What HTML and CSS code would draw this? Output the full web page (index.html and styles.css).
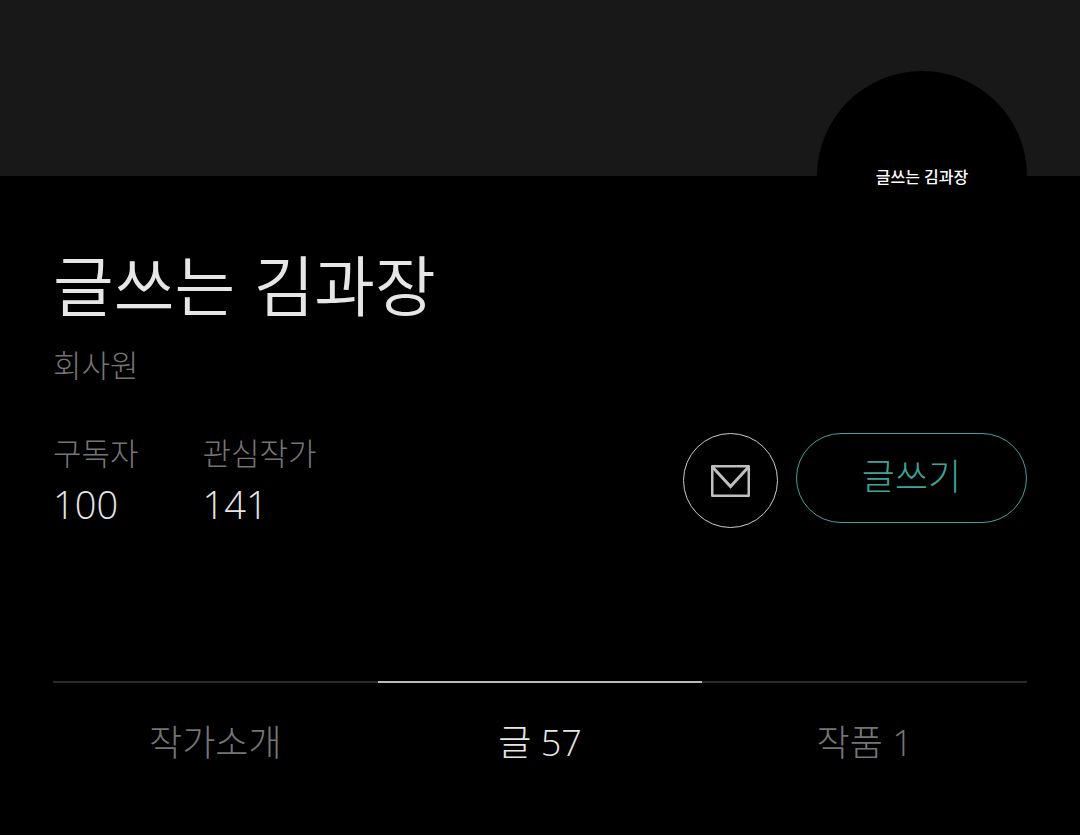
FILE: index.html
```html
<!DOCTYPE html>
<html lang="ko">
<head>
  <meta charset="UTF-8">
  <meta name="viewport" content="width=device-width, initial-scale=1.0">
  <title>글쓰는 김과장</title>
  <link rel="stylesheet" href="styles.css">
</head>
<body>

  <header class="cover">
    <div class="avatar">글쓰는 김과장</div>
  </header>

  <main class="profile">
    <h1>글쓰는 김과장</h1>
    <p class="job">회사원</p>

    <div class="summary">
      <dl class="stats">
        <div class="stat">
          <dt>구독자</dt>
          <dd>100</dd>
        </div>
        <div class="stat">
          <dt>관심작가</dt>
          <dd>141</dd>
        </div>
      </dl>

      <div class="actions">
        <button class="mail" type="button" aria-label="제안하기">
          <svg width="39" height="32" viewBox="0 0 39 32" fill="none" stroke="currentColor" stroke-linejoin="round">
            <rect x="1.25" y="1.25" width="36.5" height="29.5" stroke-width="2.5"/>
            <path d="M1.5 2L19.5 21.5L37.5 2" stroke-width="3" stroke-linejoin="miter"/>
          </svg>
        </button>
        <button class="write" type="button">글쓰기</button>
      </div>
    </div>

    <nav class="tabs">
      <a href="#info">작가소개</a>
      <a href="#articles" class="active">글 57</a>
      <a href="#works">작품 1</a>
    </nav>
  </main>

</body>
</html>
```
FILE: styles.css
```css
* {
  margin: 0;
  padding: 0;
  box-sizing: border-box;
}

body {
  background: #000;
  color: #e6e6e6;
  font-family: "Open Sans", "Noto Sans CJK KR", sans-serif;
  font-weight: 300;
}

.cover {
  position: relative;
  height: 176px;
  background: #181818;
}

.avatar {
  position: absolute;
  right: 53px;
  bottom: -105px;
  display: flex;
  justify-content: center;
  align-items: center;
  width: 210px;
  height: 210px;
  border-radius: 50%;
  background: #000;
  color: #fff;
  font-size: 16px;
  font-weight: 500;
}

.profile {
  padding: 64px 53px 0;
}

h1 {
  font-family: "Noto Sans CJK KR", sans-serif;
  font-size: 66px;
  font-weight: 350;
  line-height: 84px;
}

.job {
  margin-top: 19px;
  color: #757575;
  font-size: 31px;
  line-height: 44px;
}

.summary {
  display: flex;
  justify-content: space-between;
  margin-top: 46px;
}

.stats {
  display: flex;
  gap: 64px;
}

.stat dt {
  color: #757575;
  font-size: 31px;
  line-height: 40px;
}

.stat dd {
  font-size: 38px;
  line-height: 62px;
}

.actions {
  display: flex;
  align-items: flex-start;
  gap: 18px;
}

.actions button {
  background: none;
  font-family: inherit;
  font-weight: 300;
  cursor: pointer;
}

.mail {
  display: flex;
  justify-content: center;
  align-items: center;
  width: 95px;
  height: 95px;
  border: 1px solid #ccc;
  border-radius: 50%;
  color: #bfbfbf;
}

.actions .write {
  width: 231px;
  height: 90px;
  padding-bottom: 8px;
  border: 1px solid #3fa39b;
  border-radius: 45px;
  color: #3fa39b;
  font-size: 36px;
}

.tabs {
  display: flex;
  margin-top: 146px;
}

.tabs a {
  flex: 1;
  padding: 35px 0;
  border-top: 2px solid #2b2b2b;
  color: #757575;
  font-size: 36px;
  line-height: 50px;
  text-align: center;
  text-decoration: none;
}

.tabs .active {
  border-color: #bbb;
  color: #e6e6e6;
}
```
